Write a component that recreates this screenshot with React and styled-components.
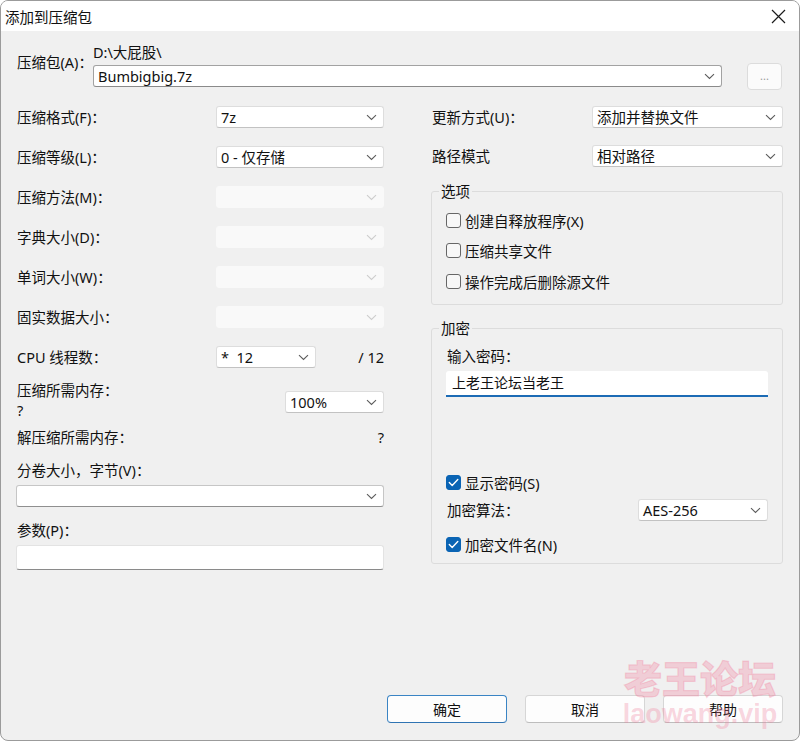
import React from 'react';
import styled, { createGlobalStyle } from 'styled-components';

const GlobalStyle = createGlobalStyle`
  html, body { margin: 0; padding: 0; background: #ffffff; }
  * { box-sizing: border-box; }
  body { font-family: "Noto Sans", "Noto Sans CJK SC", sans-serif; }
`;

const Chevron = ({ faded }) => (
  <svg width="11" height="7" viewBox="0 0 11 7">
    <path d="M1 1.2l4.5 4.3 4.5-4.3" fill="none" stroke={faded ? '#cdcdcd' : '#5c5c5c'} strokeWidth="1.1" />
  </svg>
);

const Check = () => (
  <svg width="11" height="9" viewBox="0 0 11 9">
    <path d="M1.3 4.6l2.9 2.8 5.6-6" fill="none" stroke="#ffffff" strokeWidth="1.4" strokeLinecap="round" strokeLinejoin="round" />
  </svg>
);

function Dialog() {
  return (
    <Window>
      <TitleBar>
        <Title>添加到压缩包</Title>
        <CloseBtn>
          <svg width="15" height="15" viewBox="0 0 15 15">
            <path d="M1 1l13 13M14 1L1 14" stroke="#1b1b1b" strokeWidth="1.2" />
          </svg>
        </CloseBtn>
      </TitleBar>

      <Body>
        <TopRow>
          <TopLabel>压缩包(A)：</TopLabel>
          <PathCol>
            <PathText>D:\大屁股\</PathText>
            <Combo $strong>
              <span>Bumbigbig.7z</span>
              <Chevron />
            </Combo>
          </PathCol>
          <BrowseBtn>...</BrowseBtn>
        </TopRow>

        <Columns>
          <LeftCol>
            <FieldRow>
              <Label>压缩格式(F)：</Label>
              <Combo><span>7z</span><Chevron /></Combo>
            </FieldRow>
            <FieldRow>
              <Label>压缩等级(L)：</Label>
              <Combo><span>0 - 仅存储</span><Chevron /></Combo>
            </FieldRow>
            <FieldRow>
              <Label>压缩方法(M)：</Label>
              <Combo $disabled><span /><Chevron faded /></Combo>
            </FieldRow>
            <FieldRow>
              <Label>字典大小(D)：</Label>
              <Combo $disabled><span /><Chevron faded /></Combo>
            </FieldRow>
            <FieldRow>
              <Label>单词大小(W)：</Label>
              <Combo $disabled><span /><Chevron faded /></Combo>
            </FieldRow>
            <FieldRow>
              <Label>固实数据大小：</Label>
              <Combo $disabled><span /><Chevron faded /></Combo>
            </FieldRow>
            <CpuRow>
              <Label>CPU 线程数：</Label>
              <Combo><span>*&nbsp; 12</span><Chevron /></Combo>
              <RightText>/ 12</RightText>
            </CpuRow>

            <MemRow>
              <div>
                <Label>压缩所需内存：</Label>
                <Label>?</Label>
              </div>
              <MemCombo><span>100%</span><Chevron /></MemCombo>
            </MemRow>
            <DecompRow>
              <Label>解压缩所需内存：</Label>
              <Label>?</Label>
            </DecompRow>

            <StackLabel>分卷大小，字节(V)：</StackLabel>
            <WideCombo><span /><Chevron /></WideCombo>
            <StackLabel>参数(P)：</StackLabel>
            <TextBox />
          </LeftCol>

          <RightCol>
            <SideRow>
              <Label>更新方式(U)：</Label>
              <Combo><span>添加并替换文件</span><Chevron /></Combo>
            </SideRow>
            <SideRow $gap={17}>
              <Label>路径模式</Label>
              <Combo><span>相对路径</span><Chevron /></Combo>
            </SideRow>

            <Group $top={14}>
              <Legend>选项</Legend>
              <CheckRow $top={9}><Box /><span>创建自释放程序(X)</span></CheckRow>
              <CheckRow $top={10}><Box /><span>压缩共享文件</span></CheckRow>
              <CheckRow $top={11} $bottom={13}><Box /><span>操作完成后删除源文件</span></CheckRow>
            </Group>

            <Group $top={13}>
              <Legend>加密</Legend>
              <PassLabel>输入密码：</PassLabel>
              <PassInput>上老王论坛当老王</PassInput>
              <CheckRow $top={75}><Box $checked><Check /></Box><span>显示密码(S)</span></CheckRow>
              <AlgoRow>
                <Label>加密算法：</Label>
                <Combo><span>AES-256</span><Chevron /></Combo>
              </AlgoRow>
              <CheckRow $top={13} $bottom={9}><Box $checked><Check /></Box><span>加密文件名(N)</span></CheckRow>
            </Group>
          </RightCol>
        </Columns>

        <Footer>
          <Button $primary>确定</Button>
          <Button>取消</Button>
          <Button>帮助</Button>
        </Footer>
      </Body>

      <Watermark>
        <Mark>老王论坛</Mark>
        <MarkSub>laowang.vip</MarkSub>
      </Watermark>
    </Window>
  );
}

export default function App() {
  return (
    <>
      <GlobalStyle />
      <Dialog />
    </>
  );
}

const Window = styled.div`
  position: relative;
  width: 800px;
  height: 741px;
  display: flex;
  flex-direction: column;
  border: 1px solid #9b9b9b;
  border-radius: 8px;
  overflow: hidden;
  background: #f0f0f0;
  color: #111;
`;

const TitleBar = styled.div`
  height: 30px;
  flex: none;
  display: flex;
  align-items: center;
  justify-content: space-between;
  background: #ffffff;
  padding: 0 13px 0 4px;
`;

const Title = styled.div`
  font-size: 14.5px;
  color: #111;
`;

const CloseBtn = styled.div`
  display: flex;
  align-items: center;
`;

const Body = styled.div`
  flex: 1;
  display: flex;
  flex-direction: column;
  padding: 13px 16px 17px 15px;
  font-size: 14.5px;
`;

const TopRow = styled.div`
  display: flex;
  align-items: flex-start;
`;

const TopLabel = styled.div`
  width: 77px;
  padding: 8px 0 0 1px;
  line-height: 20px;
`;

const PathCol = styled.div`
  flex: 1;
  display: flex;
  flex-direction: column;
  gap: 5px;
`;

const PathText = styled.div`
  line-height: 16px;
  height: 16px;
`;

const Combo = styled.div`
  height: 22px;
  display: flex;
  align-items: center;
  justify-content: space-between;
  padding: 0 6px 0 4px;
  border-radius: 3px;
  background: ${p => (p.$disabled ? '#f9f9f9' : '#ffffff')};
  border: 1px solid ${p => (p.$disabled ? '#f9f9f9' : p.$strong ? '#a2a2a2' : '#dddddd')};
  border-bottom-color: ${p => (p.$disabled ? '#f9f9f9' : p.$strong ? '#8a8a8a' : '#c2c2c2')};
  white-space: nowrap;
  & > span { line-height: 20px; }
`;

const BrowseBtn = styled.div`
  width: 35px;
  height: 27px;
  margin: 19px 1px 0 25px;
  display: flex;
  align-items: center;
  justify-content: center;
  background: #fbfbfb;
  border: 1px solid #dcdcdc;
  border-radius: 4px;
  font-size: 11px;
  color: #9a9a9a;
  padding-bottom: 2px;
`;

const Columns = styled.div`
  display: grid;
  grid-template-columns: 368px 352px;
  column-gap: 47px;
  margin-top: 16px;
`;

const LeftCol = styled.div`
  display: flex;
  flex-direction: column;
`;

const Label = styled.div`
  line-height: 20px;
  padding-left: 1px;
  white-space: nowrap;
`;

const FieldRow = styled.div`
  display: grid;
  grid-template-columns: 1fr 168px;
  align-items: center;
  height: 22px;
  margin-bottom: 18px;
`;

const CpuRow = styled(FieldRow)`
  grid-template-columns: 1fr 100px 68px;
  margin-bottom: 0;
`;

const RightText = styled.div`
  text-align: right;
  line-height: 20px;
`;

const MemRow = styled.div`
  display: grid;
  grid-template-columns: 1fr 99px;
  align-items: start;
  margin-top: 12px;
`;

const MemCombo = styled(Combo)`
  margin-top: 11px;
`;

const DecompRow = styled.div`
  display: flex;
  justify-content: space-between;
  margin-top: 7px;
`;

const StackLabel = styled(Label)`
  margin-top: 13px;
  margin-bottom: 5px;
`;

const WideCombo = styled(Combo)`
  border-color: #c6c6c6;
  border-bottom-color: #8f8f8f;
`;

const TextBox = styled.div`
  height: 25px;
  background: #ffffff;
  border: 1px solid #e3e3e3;
  border-bottom-color: #8a8a8a;
  border-radius: 3px;
`;

const RightCol = styled.div`
  display: flex;
  flex-direction: column;
`;

const SideRow = styled.div`
  display: grid;
  grid-template-columns: 161px 1fr;
  align-items: center;
  height: 22px;
  margin-top: ${p => p.$gap || 0}px;
`;

const Group = styled.fieldset`
  margin: ${p => p.$top}px 0 0 0;
  padding: 0 14px;
  border: 1px solid #dcdcdc;
  border-radius: 3px;
  min-width: 0;
`;

const Legend = styled.legend`
  margin-left: -7px;
  padding: 0 2px;
  line-height: 20px;
  font-size: 14.5px;
`;

const CheckRow = styled.div`
  display: flex;
  align-items: center;
  gap: 4px;
  height: 20px;
  margin-top: ${p => p.$top || 0}px;
  margin-bottom: ${p => p.$bottom || 0}px;
  white-space: nowrap;
`;

const Box = styled.div`
  width: 15px;
  height: 15px;
  flex: none;
  border-radius: 3px;
  display: flex;
  align-items: center;
  justify-content: center;
  background: ${p => (p.$checked ? '#0a64b4' : '#f7f7f7')};
  border: 1px solid ${p => (p.$checked ? '#0a64b4' : '#666666')};
`;

const PassLabel = styled(Label)`
  margin-top: 8px;
`;

const PassInput = styled.div`
  margin-top: 5px;
  height: 26px;
  background: #ffffff;
  border-bottom: 2px solid #1c6bb5;
  border-radius: 3px 3px 0 0;
  padding: 0 6px;
  line-height: 24px;
  font-size: 14px;
`;

const AlgoRow = styled.div`
  display: grid;
  grid-template-columns: 1fr 130px;
  align-items: center;
  height: 22px;
  margin-top: 7px;
`;

const Footer = styled.div`
  margin-top: auto;
  display: flex;
  justify-content: flex-end;
  gap: 18px;
`;

const Button = styled.div`
  width: 120px;
  height: 28px;
  display: flex;
  align-items: center;
  justify-content: center;
  background: #fdfdfd;
  border: 1px solid ${p => (p.$primary ? '#3a84c4' : '#d6d6d6')};
  border-bottom-color: ${p => (p.$primary ? '#2f74b3' : '#bdbdbd')};
  border-radius: 4px;
  font-size: 14px;
`;

const Watermark = styled.div`
  position: absolute;
  left: 618px;
  top: 654px;
  width: 162px;
  display: flex;
  flex-direction: column;
  align-items: center;
  pointer-events: none;
  color: rgba(240, 130, 158, 0.32);
  font-family: "Noto Sans CJK SC", sans-serif;
  font-weight: 900;
`;

const Mark = styled.div`
  font-size: 38px;
  line-height: 44px;
  -webkit-text-stroke: 1.2px rgba(240, 130, 158, 0.32);
`;

const MarkSub = styled.div`
  font-family: "Liberation Sans", sans-serif;
  font-weight: 700;
  font-size: 27px;
  line-height: 30px;
`;
